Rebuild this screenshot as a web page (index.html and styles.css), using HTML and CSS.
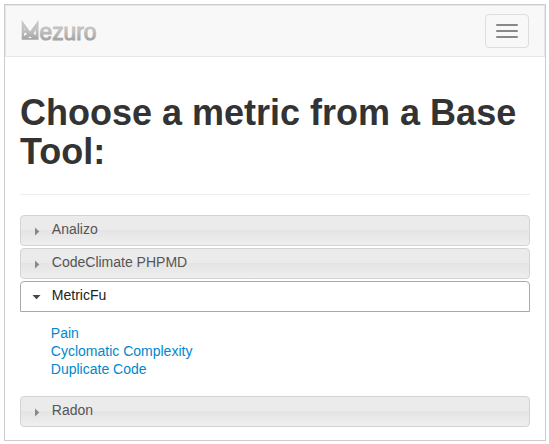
FILE: index.html
```html
<!DOCTYPE html>
<html lang="en">
<head>
<meta charset="utf-8">
<title>Mezuro</title>
<link rel="stylesheet" href="styles.css">
</head>
<body>
<div class="container">
  <nav class="navbar">
    <a class="brand" href="#" aria-label="Mezuro">
      <svg width="90" height="44" viewBox="0 -10 90 44">
        <defs>
          <linearGradient id="metal" gradientUnits="userSpaceOnUse" x1="0" y1="2" x2="0" y2="22">
            <stop offset="0" stop-color="#c6c6c6"/>
            <stop offset=".45" stop-color="#c2c2c2"/>
            <stop offset="1" stop-color="#a0a0a0"/>
          </linearGradient>
        </defs>
        <path fill="url(#metal)" fill-rule="evenodd" d="M.7 1L9 12.500L17.500 1V20.700H.7ZM3 9V11L4 10.500ZM3 17L6 15L4.500 13.500L3 14.500ZM14.800 11L12.500 14.500L14.800 16.500ZM7 19H11L9 17.500Z"/>
        <text class="brand-text" x="18.500" y="20.700" textLength="57" lengthAdjust="spacingAndGlyphs" fill="url(#metal)" stroke="url(#metal)" stroke-width="1.100">ezuro</text>
      </svg>
    </a>
    <button class="toggle" aria-label="Toggle navigation"><span></span><span></span><span></span></button>
  </nav>
  <main>
    <h1>Choose a metric from a Base Tool:</h1>
    <hr>
    <div class="accordion">
      <h3 class="header"><svg class="arrow" width="9" height="9"><path d="M3 0.500L7.300 4.500L3 8.500Z"/></svg>Analizo</h3>
      <h3 class="header"><svg class="arrow" width="9" height="9"><path d="M3 0.500L7.300 4.500L3 8.500Z"/></svg>CodeClimate PHPMD</h3>
      <h3 class="header active"><svg class="arrow" width="9" height="9"><path d="M0.500 2H8.500L4.500 6.300Z"/></svg>MetricFu</h3>
      <div class="panel">
        <a href="#">Pain</a>
        <a href="#">Cyclomatic Complexity</a>
        <a href="#">Duplicate Code</a>
      </div>
      <h3 class="header"><svg class="arrow" width="9" height="9"><path d="M3 0.500L7.300 4.500L3 8.500Z"/></svg>Radon</h3>
    </div>
  </main>
</div>
</body>
</html>
```
FILE: styles.css
```css
* {
  box-sizing: border-box;
}

body {
  margin: 0;
  padding: 4px 3px 3px 4px;
  background: #fff;
  color: #333;
  font: 14px/18px "Liberation Sans", Arial, sans-serif;
}

.container {
  height: 437px;
  border: 1px solid #ccc;
}

.navbar {
  display: flex;
  align-items: center;
  justify-content: space-between;
  height: 52px;
  padding: 0 15px;
  border: 1px solid #e7e7e7;
  background: #f8f8f8;
}

.brand svg {
  display: block;
}

.brand-text {
  font: 23.500px/1 "Liberation Sans", sans-serif;
}

.toggle {
  display: flex;
  flex-direction: column;
  gap: 4px;
  width: 44px;
  height: 34px;
  padding: 9px 10px;
  border: 1px solid #ddd;
  border-radius: 4px;
  background: transparent;
}

.toggle span {
  height: 2px;
  border-radius: 1px;
  background: #888;
}

main {
  padding: 36px 15px 0;
}

h1 {
  margin: 0;
  font-size: 36px;
  line-height: 39px;
}

hr {
  height: 1px;
  margin: 23px 0 20px;
  border: 0;
  background: #eee;
}

.accordion {
  display: flex;
  flex-direction: column;
  gap: 2px;
}

.header {
  display: flex;
  height: 31px;
  margin: 0;
  padding: 4px 11px;
  border: 1px solid #d3d3d3;
  border-radius: 4px;
  background: linear-gradient(#ebebeb 0, #ebebeb 48%, #e4e4e4 50%, #efefef 100%);
  color: #555;
  font-size: 14px;
  font-weight: normal;
}

.arrow {
  margin: 7px 10.800px 0 0;
  fill: #888;
}

.active {
  border-color: #aaa;
  border-radius: 4px 4px 0 0;
  background: #fff;
  color: #212121;
}

.active .arrow {
  fill: #454545;
}

.panel {
  display: flex;
  flex-direction: column;
  align-items: flex-start;
  height: 80px;
  padding: 10px 30.800px;
}

a {
  color: #08c;
  text-decoration: none;
}
```
